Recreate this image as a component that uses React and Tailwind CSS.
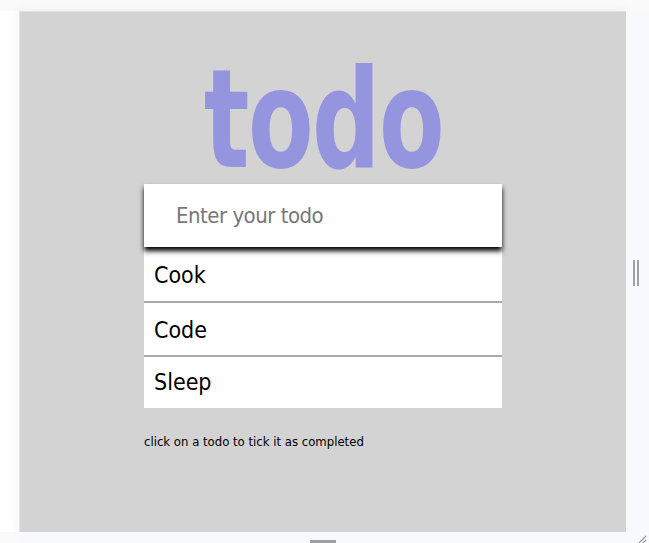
import React from "react";

const font = { fontFamily: '"DejaVu Sans Condensed", "DejaVu Sans", sans-serif' };

export default function App() {
  const items = [
    { t: "Cook", h: "h-[56px]", b: true },
    { t: "Code", h: "h-[54px]", b: true },
    { t: "Sleep", h: "h-[51px]", b: false },
  ];
  return (
    <div className="relative w-[649px] h-[543px] overflow-hidden bg-[#fafafa]" style={font}>
      <div className="h-[11px] bg-[#fafafa]" />
      <div className="flex h-[521px]">
        <div className="w-[19px] bg-white" />
        <div className="w-[607px] border-l border-t border-[#e2e2e2] bg-[#d3d3d3] shadow-[0_0_10px_rgba(0,0,0,0.06)] flex flex-col items-center">
          <h1 className="mt-[24px] h-[148px] leading-[168px] text-[138px] font-bold text-[#9494df] scale-x-[0.77] tracking-[-2px]">
            todo
          </h1>
          <div className="w-[358px] flex flex-col">
            <div className="relative z-10 h-[63px] bg-white shadow-[0_4px_5px_#000] flex items-center pl-[32px] text-[22px] text-[#777] tracking-[-0.5px]">
              Enter your todo
            </div>
            {items.map((it) => (
              <div
                key={it.t}
                className={`${it.h} bg-white flex items-center pl-[10px] text-[23px] text-black ${it.b ? "border-b-2 border-[#aaaaaa]" : ""}`}
              >
                <span className={it.b ? "mt-[2px]" : ""}>{it.t}</span>
              </div>
            ))}
            <p className="mt-[24px] text-[13px] text-black">click on a todo to tick it as completed</p>
          </div>
        </div>
        <div className="relative w-[23px] bg-[#f8f9fc]">
          <div className="absolute left-[7px] top-[249px] flex gap-[2px]">
            <div className="w-[2px] h-[26px] bg-[#a0a0a0]" />
            <div className="w-[2px] h-[26px] bg-[#a0a0a0]" />
          </div>
        </div>
      </div>
      <div className="relative ml-[20px] h-[11px] bg-[#f8f9fc]">
        <div className="absolute left-[290px] top-[8px] w-[26px] h-[3px] bg-[#a0a0a0]" />
        <svg className="absolute right-[2px] top-[2px]" width="10" height="10" viewBox="0 0 10 10">
          <path d="M9 2 L2 9 M9 6 L6 9" stroke="#999" strokeWidth="1.2" />
        </svg>
      </div>
    </div>
  );
}
